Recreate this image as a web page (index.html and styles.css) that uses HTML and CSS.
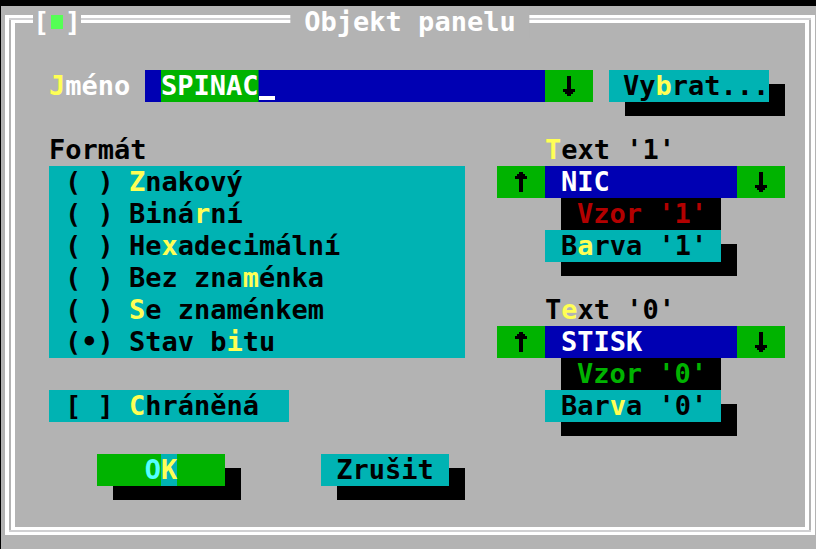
FILE: index.html
```html
<!DOCTYPE html>
<html lang="cs">
<head>
  <meta charset="utf-8">
  <meta name="viewport" content="width=device-width, initial-scale=1">
  <title>Objekt panelu</title>
  <link rel="stylesheet" href="styles.css">
</head>
<body>
  <svg class="symbols">
    <symbol id="arrow-up" viewBox="0 0 12 20">
      <path d="M4 0H8V2H10V4H12V7H8V20H4V7H0V4H2V2H4Z"/>
    </symbol>
    <symbol id="arrow-down" viewBox="0 0 12 20">
      <path d="M4 20H8V18H10V16H12V13H8V0H4V13H0V16H2V18H4Z"/>
    </symbol>
  </svg>
  <main class="dialog">
    <div class="frame">
      <button class="close" type="button" aria-label="Zavřít">[<span class="close-mark"></span>]</button>
      <h1 class="title">Objekt panelu</h1>
      <form class="content">
        <div class="name-row">
          <label class="name-label" for="name"><span class="hot">J</span>méno</label>
          <input class="field name-field" id="name" type="text" value="SPINAC">
          <button class="arrow" type="button" aria-label="Historie"><svg><use href="#arrow-down"/></svg></button>
          <button class="button pick" type="button">Vy<span class="hot">b</span>rat...</button>
        </div>

        <div class="columns">
          <div class="options">
            <div role="radiogroup" aria-labelledby="format">
              <div id="format" class="caption">Formát</div>
              <div class="list">
                <label class="choice"><input type="radio" name="format"><span><span class="hot">Z</span>nakový</span></label>
                <label class="choice"><input type="radio" name="format"><span>Biná<span class="hot">r</span>ní</span></label>
                <label class="choice"><input type="radio" name="format"><span>He<span class="hot">x</span>adecimální</span></label>
                <label class="choice"><input type="radio" name="format"><span>Bez zna<span class="hot">m</span>énka</span></label>
                <label class="choice"><input type="radio" name="format"><span><span class="hot">S</span>e znaménkem</span></label>
                <label class="choice"><input type="radio" name="format" checked><span>Stav b<span class="hot">i</span>tu</span></label>
              </div>
            </div>
            <label class="choice protected"><input type="checkbox"><span><span class="hot">C</span>hráněná</span></label>
          </div>

          <div class="states">
            <div class="state">
              <label class="caption" for="text1"><span class="hot">T</span>ext '1'</label>
              <div class="spinner">
                <button class="arrow" type="button" aria-label="Předchozí"><svg><use href="#arrow-up"/></svg></button>
                <input class="field" id="text1" type="text" value="NIC">
                <button class="arrow" type="button" aria-label="Další"><svg><use href="#arrow-down"/></svg></button>
              </div>
              <div class="sample sample-on">Vzor '1'</div>
              <button class="button color" type="button">B<span class="hot">a</span>rva '1'</button>
            </div>
            <div class="state">
              <label class="caption" for="text0">T<span class="hot">e</span>xt '0'</label>
              <div class="spinner">
                <button class="arrow" type="button" aria-label="Předchozí"><svg><use href="#arrow-up"/></svg></button>
                <input class="field" id="text0" type="text" value="STISK">
                <button class="arrow" type="button" aria-label="Další"><svg><use href="#arrow-down"/></svg></button>
              </div>
              <div class="sample sample-off">Vzor '0'</div>
              <button class="button color" type="button">Bar<span class="hot">v</span>a '0'</button>
            </div>
          </div>
        </div>

        <div class="actions">
          <button class="button ok" type="submit">O<span class="ok-key">K</span></button>
          <button class="button" type="button">Zrušit</button>
        </div>
      </form>
    </div>
  </main>
</body>
</html>
```
FILE: styles.css
```css
:root {
  --gray: #b3b3b3;
  --teal: #00b3b3;
  --blue: #0000b3;
  --green: #00b300;
  --yellow: #ffff55;
  --row: 32px;
  --cell: 16px;
}

* {
  box-sizing: border-box;
}

body {
  margin: 0;
  background: #000;
}

body,
button,
input {
  font: bold 27px/32px "DejaVu Sans Mono", monospace;
}

button,
input {
  margin: 0;
  border: 0;
  border-radius: 0;
  outline: 0;
  padding: 0;
  color: #000;
}

.symbols {
  display: none;
}

.dialog {
  min-height: calc(100vh - 6px);
  margin: 6px 0 0 1px;
  padding: 9px 1px 14px 4px;
  background: var(--gray);
}

/* Double line frame: outer border here, inner border on .content */
.frame {
  position: relative;
  border: solid #fff;
  border-width: 3px 4px;
  padding: 2px;
  background:
    linear-gradient(#d0d0d2 0 0) top / 100% 2px no-repeat,
    linear-gradient(#d0d0d2 0 0) bottom / 100% 2px no-repeat;
}

.content {
  display: grid;
  gap: var(--row);
  border: solid #fff;
  border-width: 3px 4px;
  padding: 47px 20px 41px 34px;
}

/* Title and close box interrupt the top frame line */
.title,
.close {
  position: absolute;
  top: -12px;
  margin: 0;
  background: var(--gray);
  color: #fff;
  font: inherit;
  white-space: nowrap;
}

.title {
  left: 50%;
  transform: translateX(-50%);
  padding: 0 14px;
}

.close {
  left: 24px;
  display: flex;
  align-items: center;
  justify-content: space-between;
  width: 48px;
  height: var(--row);
}

.close-mark {
  flex: none;
  width: 12px;
  height: 14px;
  margin: 0 -2px;
  background: #55ff55;
}

.hot {
  color: var(--yellow);
}

.name-row {
  display: flex;
  padding-right: var(--cell);
}

.name-label {
  width: 96px;
  color: #fff;
}

.field {
  flex: 1;
  min-width: 0;
  height: var(--row);
  padding-left: var(--cell);
  background: var(--blue);
  color: #fff;
}

/* Selected text block followed by the text cursor */
.name-field {
  background:
    linear-gradient(var(--green) 0 0) 16px 0 / 6ch 100% no-repeat,
    linear-gradient(#fff 0 0) calc(16px + 6ch) 26px / 1ch 4px no-repeat,
    var(--blue);
}

.arrow {
  display: grid;
  flex: none;
  place-items: center;
  width: 48px;
  height: var(--row);
  background: var(--green);
}

.arrow svg {
  width: 12px;
  height: 20px;
}

.button {
  width: 128px;
  height: var(--row);
  background: var(--teal);
  box-shadow: 16px 14px 0 #000;
  white-space: nowrap;
}

.pick {
  width: 160px;
  margin-left: var(--cell);
  padding-left: 14px;
  text-align: left;
}

.columns {
  display: grid;
  grid-template-columns: minmax(0, 1fr) 288px;
  gap: var(--row);
}

.options,
.states {
  display: grid;
  grid-template-columns: minmax(0, 1fr);
  align-content: start;
  gap: var(--row);
}

.caption {
  display: block;
}

.list,
.protected {
  background: var(--teal);
}

.choice {
  display: flex;
  gap: var(--cell);
  padding-left: var(--cell);
}

.choice input {
  appearance: none;
  width: 48px;
  height: var(--row);
  white-space: pre;
}

.choice input[type="radio"]::before {
  content: "( )";
}

.choice input[type="radio"]:checked::before {
  content: "(•)";
}

.choice input[type="checkbox"]::before {
  content: "[ ]";
}

.choice input[type="checkbox"]:checked::before {
  content: "[X]";
}

.protected {
  width: 240px;
}

.state {
  display: grid;
  grid-template-columns: minmax(0, 1fr);
}

.state .caption {
  margin-left: 48px;
}

.spinner {
  display: flex;
}

.sample {
  width: 160px;
  margin-left: 64px;
  padding-left: var(--cell);
  background: #000;
}

.sample-on {
  color: #b30000;
}

.sample-off {
  color: var(--green);
}

.color {
  width: 176px;
  margin-left: 48px;
  padding-left: var(--cell);
  text-align: left;
}

.actions {
  display: flex;
  gap: 96px;
  padding-left: 48px;
}

.ok {
  background: var(--green);
  color: #55ffff;
}

.ok-key {
  display: inline-block;
  background: var(--teal);
  color: var(--yellow);
}
```
